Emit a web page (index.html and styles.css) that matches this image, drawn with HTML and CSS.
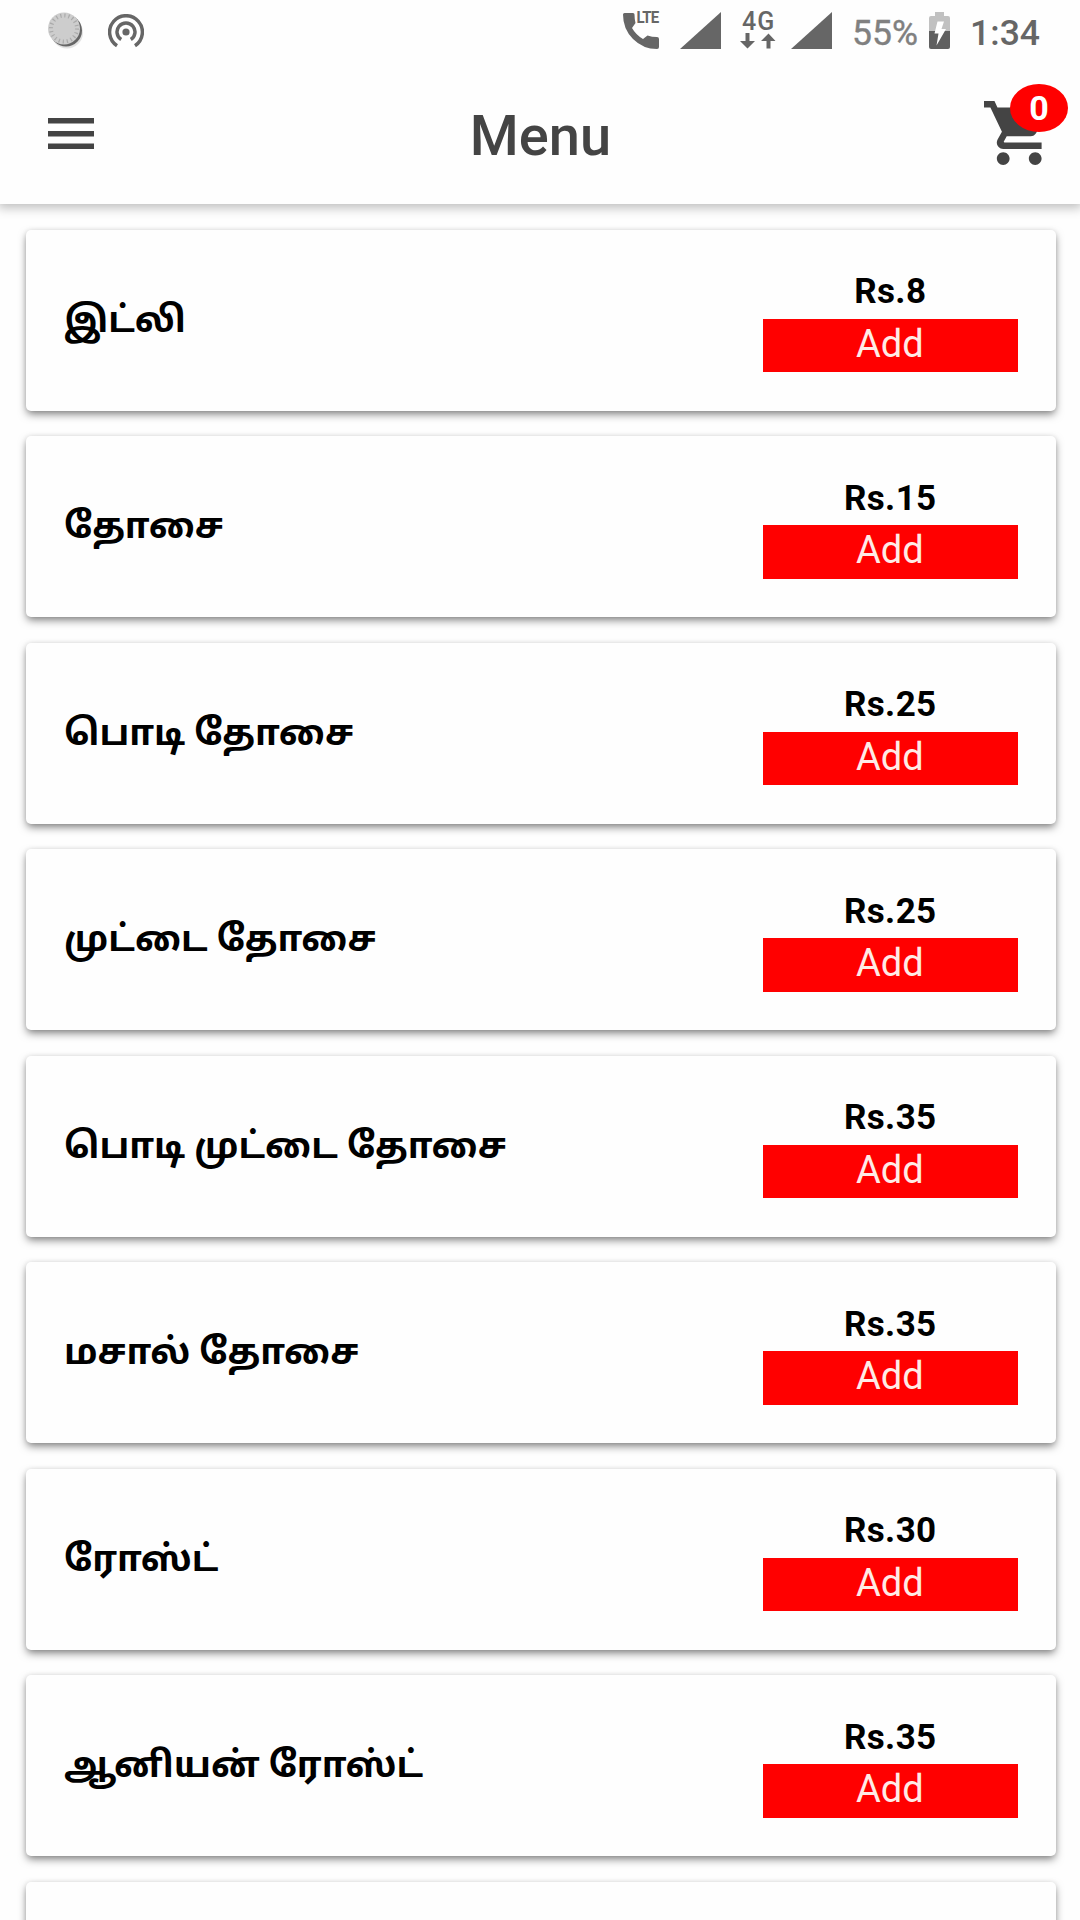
FILE: index.html
```html
<!DOCTYPE html>
<html lang="ta">
  <head>
    <meta charset="UTF-8" />
    <title>Menu</title>
    <link rel="stylesheet" href="styles.css" />
  </head>
  <body>
    <div class="status-bar">
      <div class="status-left">
        <svg class="sync" viewBox="0 0 36 38">
          <circle cx="19" cy="20.5" r="16" fill="#e2e2e2" />
          <circle cx="18" cy="18.5" r="16" fill="#666" />
          <circle cx="16" cy="16.5" r="16" fill="#cdcdcd" />
          <circle cx="16" cy="16.5" r="13" fill="none" stroke="#aaa" stroke-width="4" stroke-dasharray="1.2 2.88" />
        </svg>
        <svg class="hotspot" viewBox="0 0 36 34">
          <circle cx="18" cy="18" r="3.6" fill="#666" />
          <path d="M13.2 25.6A9 9 0 1 1 22.8 25.6M9 31.8A16.4 16.4 0 1 1 27 31.8" fill="none" stroke="#666" stroke-width="3.5" />
        </svg>
      </div>
      <div class="status-right">
        <div class="call">
          <svg viewBox="0 0 36 36">
            <path d="M1.5 0H10Q11.5 0 11.5 1.5Q11.5 6 12.5 10L9 15Q13 22 20 26L24.5 22.5Q29 24 34 24Q36 24 36 26V34Q36 36 34 36Q20 36 10 26Q0 16 0 1.5Q0 0 1.5 0Z" fill="#666" />
          </svg>
          <span>LTE</span>
        </div>
        <svg class="signal" viewBox="0 0 41 37"><path d="M0 37L41 0V37Z" fill="#666" /></svg>
        <div class="network">
          <span>4G</span>
          <svg viewBox="0 0 36 16">
            <path d="M5.5 0H9.5V8H15L7.5 15.5L0 8H5.5ZM26.5 15.5H30.5V8H35.5L28.5 0.5L21 8H26.5Z" fill="#666" />
          </svg>
        </div>
        <svg class="signal" viewBox="0 0 41 37"><path d="M0 37L41 0V37Z" fill="#666" /></svg>
        <span class="percent">55%</span>
        <svg class="battery" viewBox="0 0 21 37">
          <path d="M6 0H15V4H19Q21 4 21 6V19H0V6Q0 4 2 4H6Z" fill="#c1c1c1" />
          <path d="M0 19H21V35Q21 37 19 37H2Q0 37 0 35Z" fill="#606060" />
          <path d="M8.5 9.5H15L12.5 17H17L7.5 33.5L9.5 21.5H5.5Z" fill="#fff" />
        </svg>
        <span class="time">1:34</span>
      </div>
    </div>

    <header>
      <svg class="hamburger" viewBox="0 0 46 31">
        <path d="M0 0H46V5.5H0ZM0 13H46V18.5H0ZM0 25.5H46V31H0Z" fill="#444" />
      </svg>
      <h1>Menu</h1>
      <div class="cart">
        <svg viewBox="1 2 20 20">
          <path d="M7 18c-1.1 0-1.99.9-1.99 2S5.9 22 7 22s2-.9 2-2-.9-2-2-2zM1 2v2h2l3.6 7.59-1.35 2.45c-.16.28-.25.61-.25.96 0 1.1.9 2 2 2h12v-2H7.42c-.14 0-.25-.11-.25-.25l.03-.12.9-1.63h7.45c.75 0 1.41-.41 1.75-1.03l3.58-6.49A1 1 0 0 0 20 4H5.21l-.94-2H1zm16 16c-1.1 0-1.99.9-1.99 2s.89 2 1.99 2 2-.9 2-2-.9-2-2-2z" fill="#444" />
        </svg>
        <span class="badge">0</span>
      </div>
    </header>

    <main id="menuList"></main>

    <script>
      const items = [
        { name: "இட்லி", price: 8 },
        { name: "தோசை", price: 15 },
        { name: "பொடி தோசை", price: 25 },
        { name: "முட்டை தோசை", price: 25 },
        { name: "பொடி முட்டை தோசை", price: 35 },
        { name: "மசால் தோசை", price: 35 },
        { name: "ரோஸ்ட்", price: 30 },
        { name: "ஆனியன் ரோஸ்ட்", price: 35 },
      ];

      const cards = items.map(
        (item) => `
        <div class="card">
          <h2>${item.name}</h2>
          <div class="buy">
            <p>Rs.${item.price}</p>
            <button>Add</button>
          </div>
        </div>`
      );

      // the next card is only partly in view
      cards.push('<div class="card"></div>');
      document.getElementById("menuList").innerHTML = cards.join("");
    </script>
  </body>
</html>
```
FILE: styles.css
```css
* {
  box-sizing: border-box;
}
body {
  margin: 0;
  background-color: #fefefe;
  font-family: Roboto, "Noto Sans Tamil", "Noto Sans", sans-serif;
}
svg {
  display: block;
}
.status-bar {
  display: flex;
  justify-content: space-between;
  height: 64px;
  padding: 12px 40px 0 48px;
  color: #666;
}
.status-left,
.status-right {
  display: flex;
  align-items: flex-start;
}
.sync {
  width: 36px;
  height: 38px;
  margin-right: 24px;
}
.hotspot {
  width: 36px;
  height: 34px;
  margin-top: 2px;
}
.call {
  position: relative;
  width: 36px;
  margin: 1px 21px 0 0;
}
.call span {
  position: absolute;
  top: -2px;
  left: 13.5px;
  font-size: 15px;
  line-height: 15px;
  font-weight: 700;
  letter-spacing: -0.8px;
  transform: scaleY(1.05);
}
.signal {
  width: 41px;
  height: 37px;
}
.network {
  width: 36px;
  margin: 0 15px 0 19px;
}
.network span {
  display: block;
  height: 21px;
  padding-left: 2px;
  font-size: 25px;
  line-height: 20px;
  font-weight: 500;
  letter-spacing: 1px;
}
.network svg {
  width: 36px;
  height: 16px;
}
.percent {
  width: 66px;
  margin: 1px 11px 0 20px;
  color: #808080;
  font-size: 35.5px;
  line-height: 41px;
  -webkit-text-stroke: 0.4px #808080;
}
.battery {
  width: 21px;
  height: 37px;
  margin-right: 20px;
}
.time {
  margin-top: 1px;
  font-size: 35.5px;
  line-height: 41px;
  font-weight: 500;
}
header {
  display: flex;
  position: relative;
  justify-content: space-between;
  height: 140px;
  padding: 20px 12px 0 48px;
  box-shadow: 0 2px 10px 2px rgba(0, 0, 0, 0.25);
  /* keep the shadow below the header only */
  clip-path: inset(0 0 -20px 0);
}
.hamburger {
  width: 46px;
  height: 31px;
  margin-top: 33.5px;
}
h1 {
  margin: 19px 0 0 3px;
  color: #444;
  font-size: 56px;
  line-height: 66px;
  font-weight: 500;
}
.cart {
  position: relative;
  width: 84px;
}
.cart svg {
  width: 64px;
  height: 64px;
  margin-top: 17px;
}
.badge {
  position: absolute;
  top: 0;
  right: 0;
  width: 58px;
  height: 48px;
  border-radius: 50%;
  background-color: #f00;
  color: #fff;
  font-size: 34px;
  line-height: 49px;
  font-weight: 700;
  text-align: center;
}
main {
  display: flex;
  flex-direction: column;
  gap: 25.5px;
  height: 1716px;
  padding: 25.5px 24px 0 26px;
  overflow: hidden;
}
.card {
  display: flex;
  flex: none;
  justify-content: space-between;
  height: 181px;
  padding: 40px 38px 0 38px;
  border-radius: 5px;
  background-color: #fefefe;
  box-shadow: 0 4px 8px -1px rgba(0, 0, 0, 0.5), 0 0 5px rgba(0, 0, 0, 0.08);
}
h2 {
  margin: 23px 0 0;
  font-size: 35.9px;
  line-height: 54px;
  font-weight: 700;
  white-space: nowrap;
}
.buy {
  width: 255.5px;
}
p {
  margin: 0;
  height: 49px;
  padding-top: 1.5px;
  font-size: 35px;
  line-height: 42px;
  font-weight: 700;
  letter-spacing: 0.4px;
  text-align: center;
}
button {
  display: block;
  width: 100%;
  height: 53.5px;
  padding: 0 1px 3px 0;
  border: none;
  background-color: #f00;
  color: #ffebe6;
  font-family: inherit;
  font-size: 38px;
  line-height: 50px;
}
```
